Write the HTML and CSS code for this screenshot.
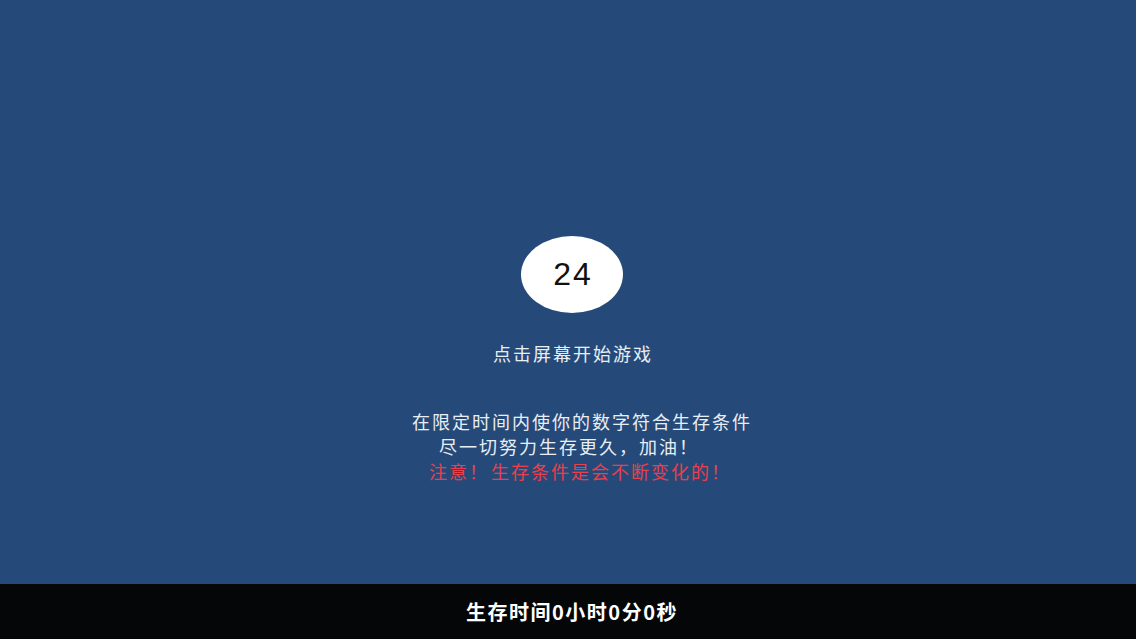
FILE: index.html
```
<!DOCTYPE html>
<html lang="zh">
<head>
<meta charset="utf-8">
<link rel="stylesheet" href="styles.css">
</head>
<body>
<div class="screen">
  <main class="stage">
    <div class="bubble">24</div>
    <p class="hint">点击屏幕开始游戏</p>
    <div class="tips">
      <p class="tip tip-a">在限定时间内使你的数字符合生存条件</p>
      <p class="tip tip-b">尽一切努力生存更久，加油！</p>
      <p class="tip tip-warn">注意！<span class="gap"></span>生存条件是会不断变化的！</p>
    </div>
  </main>
  <footer class="bar">生存时间0小时0分0秒</footer>
</div>
</body>
</html>
```
FILE: styles.css
```
html, body {
  margin: 0;
  padding: 0;
  width: 1136px;
  height: 639px;
  overflow: hidden;
  font-family: "Noto Sans CJK SC", "Noto Sans", sans-serif;
}
.screen {
  display: flex;
  flex-direction: column;
  width: 1136px;
  height: 639px;
}
.stage {
  height: 584px;
  background: #254a79;
  display: flex;
  flex-direction: column;
  align-items: center;
  padding-top: 236px;
  padding-left: 8px;
  box-sizing: border-box;
}
.bubble {
  width: 102px;
  height: 77px;
  border-radius: 50%;
  background: #ffffff;
  color: #111;
  font-family: "Liberation Sans", Arial, sans-serif;
  font-size: 32px;
  letter-spacing: 2px;
  text-indent: 2px;
  display: flex;
  align-items: center;
  justify-content: center;
}
.hint {
  margin: 28px 0 0 0;
  color: #e9eef5;
  font-size: 18px;
  line-height: 25px;
  letter-spacing: 2px;
  text-indent: 2px;
}
.tips {
  margin-top: 43px;
  display: flex;
  flex-direction: column;
  align-items: center;
}
.tip {
  margin: 0;
  color: #e9eef5;
  font-size: 18px;
  line-height: 25px;
  letter-spacing: 2px;
}
.tip-a {
  margin-left: 20px;
}
.tip-b {
  margin-right: 6px;
}
.tip-warn {
  color: #e8404c;
  margin-left: 16px;
}
.gap {
  display: inline-block;
  width: 2px;
}
.bar {
  height: 55px;
  background: #040608;
  color: #ffffff;
  font-weight: bold;
  font-size: 20px;
  letter-spacing: 1.5px;
  display: flex;
  align-items: center;
  justify-content: center;
  padding-left: 8px;
}
```
